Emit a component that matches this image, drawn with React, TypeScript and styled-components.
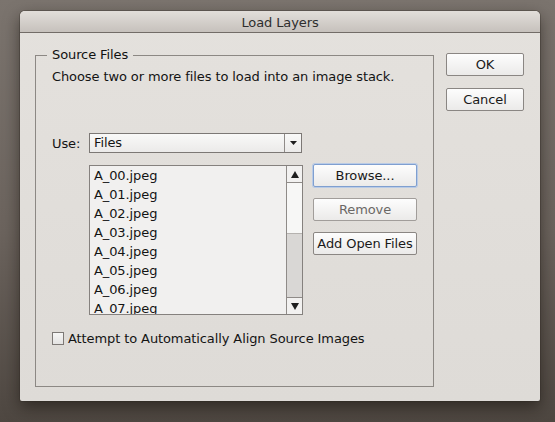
import styled, { createGlobalStyle } from 'styled-components';

const GlobalStyle = createGlobalStyle`
  html, body {
    margin: 0;
    padding: 0;
  }
  body {
    width: 555px;
    height: 422px;
    overflow: hidden;
    background: linear-gradient(#7b746e, #6b635d 55%, #4e4741);
    font-family: "DejaVu Sans", "Liberation Sans", sans-serif;
    font-size: 13px;
    letter-spacing: -0.1px;
    color: #141414;
  }
`;

const files = ['A_00.jpeg', 'A_01.jpeg', 'A_02.jpeg', 'A_03.jpeg', 'A_04.jpeg', 'A_05.jpeg', 'A_06.jpeg', 'A_07.jpeg'];

const Arrow = ({ down, small }: { down?: boolean; small?: boolean }) => {
  const w = small ? 7 : 8;
  const h = small ? 4 : 7;
  return (
    <svg width={w} height={h} viewBox={`0 0 ${w} ${h}`}>
      <polygon points={down ? `0,0 ${w},0 ${w / 2},${h}` : `0,${h} ${w},${h} ${w / 2},0`} fill="#1e1e1e" />
    </svg>
  );
};

const App = () => {
  return (
    <Screen>
      <GlobalStyle />
      <Dialog>
        <TitleBar>Load Layers</TitleBar>
        <Body>
          <Group>
            <Legend>Source Files</Legend>
            <Hint>Choose two or more files to load into an image stack.</Hint>
            <UseRow>
              <UseLabel>Use:</UseLabel>
              <Select>
                <SelectValue>Files</SelectValue>
                <SelectArrow>
                  <Arrow down small />
                </SelectArrow>
              </Select>
            </UseRow>
            <FilesRow>
              <FileList>
                <Items>
                  {files.map((f) => (
                    <Item key={f}>{f}</Item>
                  ))}
                </Items>
                <ScrollBar>
                  <ScrollButton>
                    <Arrow />
                  </ScrollButton>
                  <Thumb />
                  <Track />
                  <ScrollButton $bottom>
                    <Arrow down />
                  </ScrollButton>
                </ScrollBar>
              </FileList>
              <SideButtons>
                <Button $width={104} $focused>Browse...</Button>
                <Button $width={104} $disabled>Remove</Button>
                <Button $width={104}>Add Open Files</Button>
              </SideButtons>
            </FilesRow>
            <CheckRow>
              <CheckBox />
              <span>Attempt to Automatically Align Source Images</span>
            </CheckRow>
          </Group>
          <DialogButtons>
            <Button $width={78}>OK</Button>
            <Button $width={78}>Cancel</Button>
          </DialogButtons>
        </Body>
      </Dialog>
    </Screen>
  );
};

export default App;

const Screen = styled.div`
  width: 555px;
  height: 422px;
  padding: 11px 0 0 20px;
  box-sizing: border-box;
`;

const Dialog = styled.div`
  width: 520px;
  height: 390px;
  display: flex;
  flex-direction: column;
  background: linear-gradient(#e4e1dd, #dedbd7);
  border-radius: 5px 5px 2px 2px;
  overflow: hidden;
  box-shadow: 0 6px 16px rgba(20, 14, 10, 0.55), 0 0 0 1px rgba(60, 54, 48, 0.35);
`;

const TitleBar = styled.div`
  height: 22px;
  flex: none;
  box-sizing: border-box;
  padding-top: 2px;
  border-bottom: 1px solid #726c67;
  background: linear-gradient(#e2deda, #c6c1bc);
  display: flex;
  align-items: center;
  justify-content: center;
  color: #2e2e2e;
`;

const Body = styled.div`
  flex: 1;
  display: flex;
  gap: 12px;
  padding: 14px 16px 15px 15px;
`;

const Group = styled.fieldset`
  margin: 0;
  width: 400px;
  height: 340px;
  box-sizing: border-box;
  padding: 6px 16px 0 16px;
  border: 1px solid #8c8884;
  display: flex;
  flex-direction: column;
  align-items: flex-start;
`;

const Legend = styled.legend`
  margin-left: -5px;
  padding: 0 5px;
  line-height: 16px;
  color: #111;
`;

const Hint = styled.div`
  line-height: 16px;
`;

const UseRow = styled.div`
  margin-top: 48px;
  display: flex;
  align-items: center;
`;

const UseLabel = styled.span`
  width: 37px;
`;

const Select = styled.div`
  width: 213px;
  height: 20px;
  box-sizing: border-box;
  display: flex;
  border: 1px solid #7c7875;
  background: linear-gradient(#f9f9f8, #ebeae9);
`;

const SelectValue = styled.div`
  flex: 1;
  padding-left: 4px;
  line-height: 18px;
`;

const SelectArrow = styled.div`
  width: 16px;
  border-left: 1px solid #8f8b88;
  display: flex;
  align-items: center;
  justify-content: center;
`;

const FilesRow = styled.div`
  margin: 12px 0 0 37px;
  display: flex;
  gap: 10px;
  align-items: flex-start;
`;

const FileList = styled.div`
  width: 214px;
  height: 150px;
  box-sizing: border-box;
  display: flex;
  border: 1px solid #85817e;
  background: #f1f0ef;
  overflow: hidden;
`;

const Items = styled.div`
  flex: 1;
  padding-left: 4px;
  overflow: hidden;
`;

const Item = styled.div`
  height: 19px;
  line-height: 19px;
  white-space: nowrap;
`;

const ScrollBar = styled.div`
  width: 15px;
  border-left: 1px solid #8f8b88;
  display: flex;
  flex-direction: column;
`;

const ScrollButton = styled.div<{ $bottom?: boolean }>`
  height: 16px;
  flex: none;
  display: flex;
  align-items: center;
  justify-content: center;
  background: #f2f1f0;
  ${({ $bottom }) => ($bottom ? 'border-top: 1px solid #8f8b88;' : 'border-bottom: 1px solid #8f8b88;')}
`;

const Thumb = styled.div`
  height: 50px;
  flex: none;
  background: #f7f7f6;
  border-bottom: 1px solid #b5b2af;
`;

const Track = styled.div`
  flex: 1;
  background: #d9d7d5;
`;

const SideButtons = styled.div`
  margin-top: -1px;
  display: flex;
  flex-direction: column;
  gap: 11px;
`;

const Button = styled.div<{ $width: number; $focused?: boolean; $disabled?: boolean }>`
  width: ${({ $width }) => $width}px;
  height: 23px;
  box-sizing: border-box;
  display: flex;
  align-items: center;
  justify-content: center;
  border: 1px solid ${({ $focused, $disabled }) => ($focused ? '#7f9fd0' : $disabled ? '#a19d9a' : '#8a8683')};
  border-radius: 2px;
  background: linear-gradient(#fdfdfd, #ebeae9);
  color: ${({ $disabled }) => ($disabled ? '#6b6866' : '#1a1a1a')};
  box-shadow: ${({ $focused }) => ($focused ? '0 0 0 1px #b9cbe6' : 'none')};
`;

const CheckRow = styled.div`
  margin-top: 16px;
  display: flex;
  align-items: center;
  gap: 4px;
`;

const CheckBox = styled.div`
  width: 12px;
  height: 13px;
  box-sizing: border-box;
  border: 1px solid #7d7976;
  background: linear-gradient(#f6f6f5, #e4e3e2);
`;

const DialogButtons = styled.div`
  padding-top: 6px;
  display: flex;
  flex-direction: column;
  gap: 12px;
`;
